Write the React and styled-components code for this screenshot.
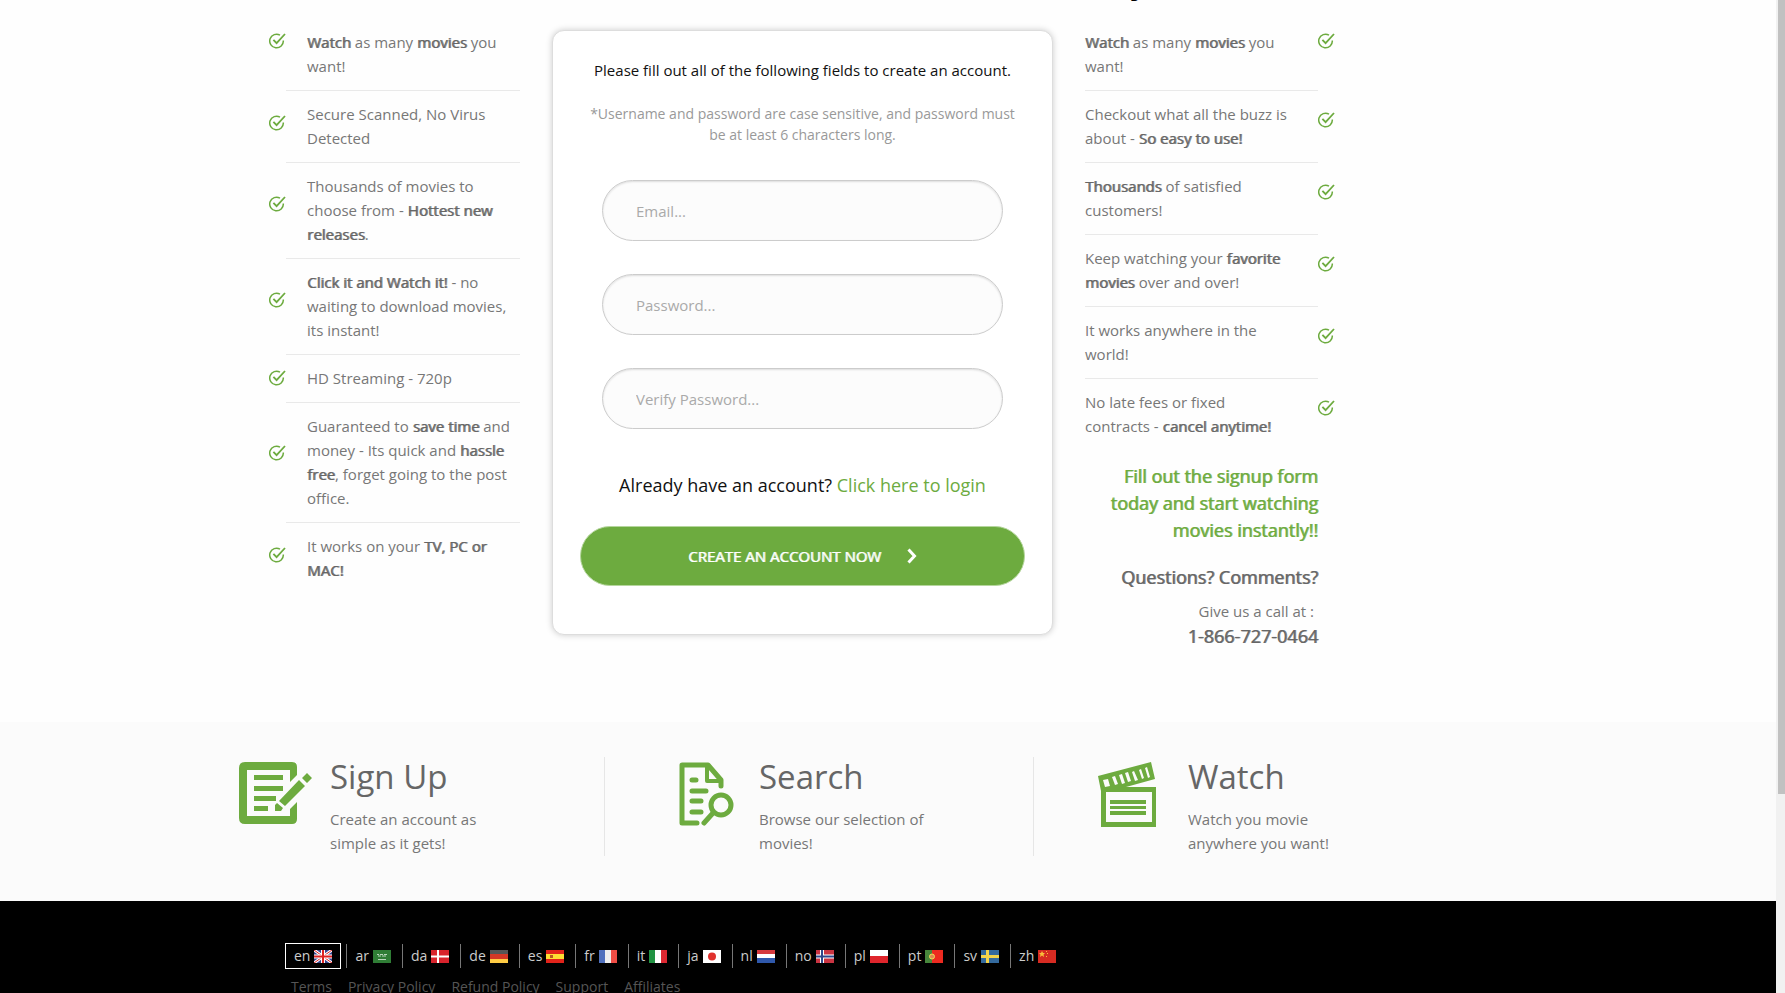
import React from 'react';
import styled, { createGlobalStyle, css } from 'styled-components';

const green = '#6dab3f';

const GlobalStyle = createGlobalStyle`
  * {
    box-sizing: border-box;
  }

  body {
    margin: 0;
    background: #fefefe;
    color: #777;
    font-family: 'Open Sans', 'Noto Sans', sans-serif;
    font-size: 15px;
    line-height: 24px;
  }

  h2, h3, p, ul {
    margin: 0;
    padding: 0;
    font-weight: 400;
  }

  a {
    text-decoration: none;
  }
`;

// the regular face thickened, so that bold words keep the regular widths
const thick = css`
  font-weight: 400;
  text-shadow: 1px 0 0 color-mix(in srgb, currentColor 80%, transparent);
`;

const Window = styled.div`
  display: flex;
  height: 100vh;
  overflow: hidden;
`;

const Page = styled.div`
  flex: 1;
  min-width: 0;
`;

const ScrollTrack = styled.div`
  width: 9px;
  padding-left: 2px;
  background: #f1f1f1;
`;

const ScrollThumb = styled.div`
  height: 80%;
  background: #c1c1c1;
`;

const Main = styled.main`
  display: grid;
  grid-template-columns: 251px minmax(0, 501px) 250px;
  justify-content: start;
  align-items: start;
  column-gap: 32px;
  padding: 0 40px 72px 269px;
`;

const LeftColumn = styled.section`
  padding-top: 19px;
`;

const RightColumn = styled.section`
  min-width: 0;
`;

const Heading = styled.h2`
  height: 48px;
  margin-top: -29px;
  color: #000;
  font-size: 30px;
  ${thick}
`;

const List = styled.ul`
  list-style: none;
`;

const Item = styled.li`
  display: flex;
  flex-direction: ${({ $right }) => ($right ? 'row-reverse' : 'row')};
`;

const CheckColumn = styled.div`
  display: flex;
  flex-direction: column;
  width: 17px;
  padding-top: 4px;

  &::before {
    content: '';
    flex-grow: ${({ $right }) => ($right ? 33 : 38)};
  }

  &::after {
    content: '';
    flex-grow: ${({ $right }) => ($right ? 67 : 62)};
  }

  ${Item}:first-child & {
    padding-top: 14px;
  }

  ${Item}:first-child &::before {
    display: none;
  }
`;

const ItemText = styled.div`
  flex: 1;
  padding: ${({ $right }) => ($right ? '11px 26px 12px 0' : '11px 0 12px 21px')};
  border-bottom: 1px solid #e9e9e9;

  ${Item}:last-child & {
    border-bottom-color: transparent;
  }
`;

const Strong = styled.strong`
  color: #666;
  ${thick}
`;

const Aside = styled.div`
  padding: 12px 17px 0 0;
  text-align: right;
`;

const Pitch = styled.p`
  color: ${({ $color }) => $color || '#666'};
  font-size: 18px;
  line-height: 27px;
  ${thick}
`;

const Questions = styled(Pitch)`
  margin: 20px 0 8px;
`;

const Call = styled.p`
  padding-right: 4px;
`;

const Card = styled.form`
  display: flex;
  flex-direction: column;
  margin-top: 30px;
  padding: 27px 27px 48px;
  border: 1px solid #ddd;
  border-radius: 12px;
  background: #fff;
  box-shadow: 0 0 6px #ccc;
  text-align: center;
`;

const Lead = styled.p`
  color: #111;
`;

const Note = styled.p`
  margin: 21px 0 35px;
  color: #999;
  font-size: 14px;
  line-height: 21px;
`;

const Fields = styled.div`
  display: grid;
  gap: 33px;
  padding: 0 22px;
`;

const Input = styled.input`
  width: 100%;
  height: 61px;
  padding: 0 33px;
  border: 1px solid #ccc;
  border-radius: 31px;
  background: #fcfcfc;
  box-shadow: inset 0 1px 2px #ddd;
  font: inherit;

  &::placeholder {
    color: #aaa;
    opacity: 1;
  }
`;

const Login = styled.p`
  margin: 42px 0 27px;
  color: #111;
  font-size: 18px;
  line-height: 28px;

  a {
    color: ${green};
  }
`;

const Submit = styled.button`
  display: flex;
  align-items: center;
  justify-content: center;
  gap: 26px;
  height: 60px;
  border: 1px solid #b5d69d;
  border-radius: 30px;
  background: ${green};
  color: #fff;
  font: inherit;
  ${thick}
`;

const Steps = styled.section`
  display: grid;
  grid-template-columns: 366px 429px 1fr;
  padding: 35px 40px 45px 239px;
  background: #fbfbfb;
`;

const Step = styled.div`
  display: flex;
  height: 99px;
  padding-left: ${({ $indent }) => $indent}px;
  border-right: 1px solid #e6e6e6;

  &:last-child {
    border-right: 0;
  }

  svg {
    flex: none;
    margin-top: 5px;
  }
`;

const StepText = styled.div`
  width: 180px;
  margin-left: ${({ $gap }) => $gap}px;
`;

const StepTitle = styled.h3`
  margin-bottom: 10px;
  color: #666;
  font-size: 33px;
  line-height: 40px;
`;

const Footer = styled.footer`
  min-height: 120px;
  padding: 42px 40px 0 285px;
  background: #000;
`;

const Languages = styled.nav`
  display: flex;
  height: 26px;
`;

const Language = styled.a`
  display: flex;
  align-items: center;
  gap: 4px;
  height: 24px;
  margin-top: 1px;
  padding: 0 11px 0 8px;
  border-left: 1px solid #777;
  color: #ccc;
  font-size: 14px;

  &:first-child {
    height: 26px;
    margin: 0 5px 0 0;
    padding: 0 8px;
    border: 1px solid #fff;
  }
`;

const FooterLinks = styled.nav`
  display: flex;
  gap: 16px;
  padding: 6px;

  a {
    color: #555;
    font-size: 14px;
  }
`;

const CheckIcon = () => (
  <svg width="17" height="16" viewBox="0 0 17 16" fill="none" stroke={green} strokeWidth="1.5">
    <path d="M11 2.2A6.8 6.8 0 1 0 14.3 7.5" />
    <path d="M4.4 6.8l3.2 3.4L16 1" strokeWidth="1.8" />
  </svg>
);

const SignUpIcon = () => (
  <svg width="74" height="62" viewBox="0 0 74 62" fill={green}>
    <path d="M6 0h47q5 0 5 5v8l-7 7V8H8v46h43v-7l7-7v17q0 5-5 5H6q-6 0-6-6V6q0-6 6-6z" />
    <path d="M15 13h29v5H15zM15 24h29v5H15zM15 34h22v5H15zM15 44h14v5H15z" />
    <path d="M60 18l6 6-20 20-6-5zM68 11l5 5-5 5-5-5zM38 41l6 5-2 3h-6v-6z" />
  </svg>
);

const SearchIcon = () => (
  <svg
    width="56"
    height="64"
    viewBox="0 0 56 64"
    fill="none"
    stroke={green}
    strokeWidth="5"
    strokeLinecap="round"
    strokeLinejoin="round"
  >
    <path d="M18 61H3V3h26l13 15v6" />
    <path d="M28 4v15h14" strokeWidth="4" />
    <path d="M13 18h4M13 29h14M13 39h9M13 50h9" />
    <circle cx="42" cy="43" r="10" />
    <path d="M34 51L25 61" />
  </svg>
);

const WatchIcon = () => (
  <svg width="59" height="66" viewBox="0 0 59 66">
    <path fill={green} d="M0 14L53 0l4 17-29 8h30v40H3V29z" />
    <path fill="#fbfbfb" d="M8 30h46v30H8z" />
    <path
      fill="#fbfbfb"
      d="M5 18l5-1 2 7-5 1zM14 15l3-1 3 8-3 1zM21 13l3-1 3 9-3 1zM27 11l3-1 3 9-3 1zM34 10l2-1 4 9-3 1zM41 8l2-1 3 9-2 1zM47 6l2-1 3 10-2 1z"
    />
    <path fill={green} d="M12 38h36v4H12zM12 44h36v3H12zM12 49h36v4H12z" />
  </svg>
);

const ChevronIcon = () => (
  <svg width="10" height="16" viewBox="0 0 10 16" fill="none" stroke="#fff" strokeWidth="3">
    <path d="M1.5 1.5L7.5 8l-6 6.5" />
  </svg>
);

const flags = {
  en: (
    <>
      <path fill="#35458f" d="M0 0h18v13H0z" />
      <path stroke="#fff" strokeWidth="3" d="M0 0l18 13M18 0L0 13" />
      <path stroke="#d22" d="M0 0l18 13M18 0L0 13" />
      <path stroke="#fff" strokeWidth="4" d="M9 0v13M0 6.5h18" />
      <path stroke="#d22" strokeWidth="2" d="M9 0v13M0 6.5h18" />
    </>
  ),
  ar: (
    <>
      <path fill="#2f7d35" d="M0 0h18v13H0z" />
      <path stroke="#b9d6bb" d="M4 4.5h2M7 4.5h3M11 4.5h3M5 6h3M9 6h4M5 9.5h8" />
    </>
  ),
  da: (
    <>
      <path fill="#d8232c" d="M0 0h18v13H0z" />
      <path stroke="#fff" strokeWidth="2" d="M7 0v13M0 6.5h18" />
    </>
  ),
  de: (
    <>
      <path fill="#555" d="M0 0h18v4H0z" />
      <path fill="#d33826" d="M0 4h18v5H0z" />
      <path fill="#fc4" d="M0 9h18v4H0z" />
    </>
  ),
  es: (
    <>
      <path fill="#e2231a" d="M0 0h18v13H0z" />
      <path fill="#fd3" d="M0 4h18v5H0z" />
      <path fill="#b85a22" d="M4 5h3v3H4z" />
    </>
  ),
  fr: (
    <>
      <path fill="#5070bd" d="M0 0h6v13H0z" />
      <path fill="#eee" d="M6 0h6v13H6z" />
      <path fill="#ef4d45" d="M12 0h6v13h-6z" />
    </>
  ),
  it: (
    <>
      <path fill="#219342" d="M0 0h6v13H0z" />
      <path fill="#fff" d="M6 0h6v13H6z" />
      <path fill="#dd2832" d="M12 0h6v13h-6z" />
    </>
  ),
  ja: (
    <>
      <path fill="#fff" d="M0 0h18v13H0z" />
      <circle cx="9" cy="6.5" r="4" fill="#e0312d" />
    </>
  ),
  nl: (
    <>
      <path fill="#d63a3e" d="M0 0h18v4H0z" />
      <path fill="#fff" d="M0 4h18v4H0z" />
      <path fill="#2f58ab" d="M0 8h18v5H0z" />
    </>
  ),
  no: (
    <>
      <path fill="#ca3442" d="M0 0h18v13H0z" />
      <path stroke="#fff" strokeWidth="4" d="M6 0v13M0 6.5h18" />
      <path stroke="#30478b" strokeWidth="2" d="M6 0v13M0 6.5h18" />
    </>
  ),
  pl: (
    <>
      <path fill="#fff" d="M0 0h18v7H0z" />
      <path fill="#df252c" d="M0 6h18v7H0z" />
    </>
  ),
  pt: (
    <>
      <path fill="#47863b" d="M0 0h7v13H0z" />
      <path fill="#ed2a20" d="M7 0h11v13H7z" />
      <circle cx="7" cy="6.5" r="2.5" fill="#d85" stroke="#ed5" />
    </>
  ),
  sv: (
    <>
      <path fill="#346a9d" d="M0 0h18v13H0z" />
      <path stroke="#f3d34a" strokeWidth="3" d="M6.5 0v13M0 6.5h18" />
    </>
  ),
  zh: (
    <>
      <path fill="#d62b22" d="M0 0h18v13H0z" />
      <path fill="#f8bf3a" d="M4 1l1 2h2L5.5 4.500 6 7 4 5.500 2 7l.5-2.500L1 3h2zM8 1h1v1H8zM9 3h1v1H9zM8 6h1v1H8z" />
    </>
  ),
};

const Flag = ({ code }) => (
  <svg width="18" height="13" viewBox="0 0 18 13">
    {flags[code]}
  </svg>
);

const leftItems = [
  <><Strong>Watch</Strong> as many <Strong>movies</Strong> you want!</>,
  <>Secure Scanned, No Virus Detected</>,
  <>Thousands of movies to choose from - <Strong>Hottest new releases</Strong>.</>,
  <><Strong>Click it and Watch it!</Strong> - no waiting to download movies, its instant!</>,
  <>HD Streaming - 720p</>,
  <>
    Guaranteed to <Strong>save time</Strong> and money - Its quick and{' '}
    <Strong>hassle free</Strong>, forget going to the post office.
  </>,
  <>It works on your <Strong>TV, PC or MAC!</Strong></>,
];

const rightItems = [
  <><Strong>Watch</Strong> as many <Strong>movies</Strong> you want!</>,
  <>Checkout what all the buzz is about - <Strong>So easy to use!</Strong></>,
  <><Strong>Thousands</Strong> of satisfied customers!</>,
  <>Keep watching your <Strong>favorite movies</Strong> over and over!</>,
  <>It works anywhere in the world!</>,
  <>No late fees or fixed contracts - <Strong>cancel anytime!</Strong></>,
];

const Benefits = ({ items, right }) => (
  <List>
    {items.map((item, i) => (
      <Item key={i} $right={right}>
        <CheckColumn $right={right}>
          <CheckIcon />
        </CheckColumn>
        <ItemText $right={right}>{item}</ItemText>
      </Item>
    ))}
  </List>
);

const SignUpForm = () => (
  <Card onSubmit={(e) => e.preventDefault()}>
    <Lead>Please fill out all of the following fields to create an account.</Lead>
    <Note>
      *Username and password are case sensitive, and password must
      <br />
      be at least 6 characters long.
    </Note>
    <Fields>
      <Input type="email" aria-label="Email" placeholder="Email..." />
      <Input type="password" aria-label="Password" placeholder="Password..." />
      <Input type="password" aria-label="Verify Password" placeholder="Verify Password..." />
    </Fields>
    <Login>
      Already have an account? <a href="#login">Click here to login</a>
    </Login>
    <Submit type="submit">
      CREATE AN ACCOUNT NOW
      <ChevronIcon />
    </Submit>
  </Card>
);

const App = () => (
  <Window>
    <GlobalStyle />
    <Page>
      <Main>
        <LeftColumn>
          <Benefits items={leftItems} />
        </LeftColumn>
        <SignUpForm />
        <RightColumn>
          <Heading>Why</Heading>
          <Benefits items={rightItems} right />
          <Aside>
            <Pitch $color={green}>
              Fill out the signup form today and start watching movies instantly!!
            </Pitch>
            <Questions>Questions? Comments?</Questions>
            <Call>Give us a call at :</Call>
            <Pitch>1-866-727-0464</Pitch>
          </Aside>
        </RightColumn>
      </Main>
      <Steps>
        <Step $indent={0}>
          <SignUpIcon />
          <StepText $gap={17}>
            <StepTitle>Sign Up</StepTitle>
            <p>Create an account as simple as it gets!</p>
          </StepText>
        </Step>
        <Step $indent={74}>
          <SearchIcon />
          <StepText $gap={24}>
            <StepTitle>Search</StepTitle>
            <p>Browse our selection of movies!</p>
          </StepText>
        </Step>
        <Step $indent={64}>
          <WatchIcon />
          <StepText $gap={31}>
            <StepTitle>Watch</StepTitle>
            <p>Watch you movie anywhere you want!</p>
          </StepText>
        </Step>
      </Steps>
      <Footer>
        <Languages>
          {Object.keys(flags).map((code) => (
            <Language key={code} href={`#${code}`}>
              {code}
              <Flag code={code} />
            </Language>
          ))}
        </Languages>
        <FooterLinks>
          <a href="#terms">Terms</a>
          <a href="#privacy">Privacy Policy</a>
          <a href="#refund">Refund Policy</a>
          <a href="#support">Support</a>
          <a href="#affiliates">Affiliates</a>
        </FooterLinks>
      </Footer>
    </Page>
    <ScrollTrack>
      <ScrollThumb />
    </ScrollTrack>
  </Window>
);

export default App;
